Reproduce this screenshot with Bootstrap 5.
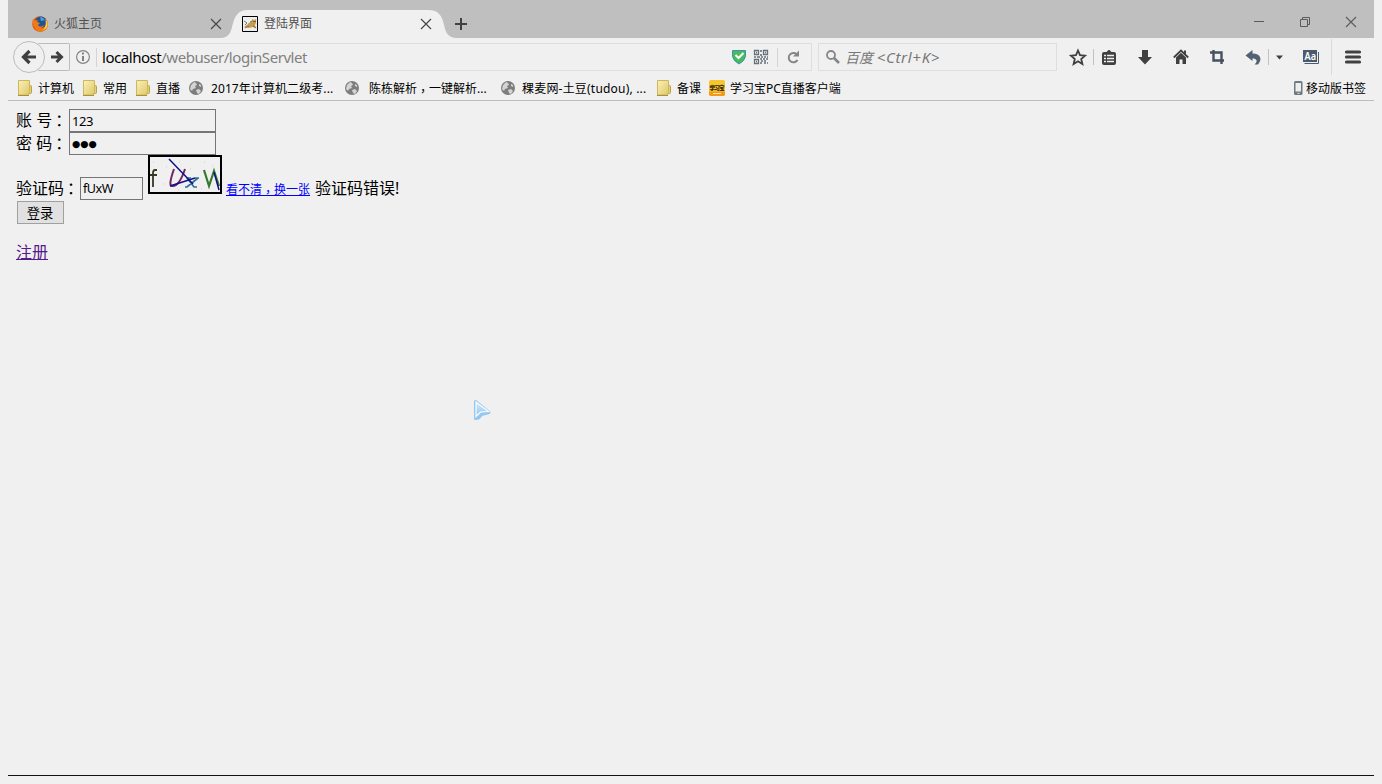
<!DOCTYPE html>
<html lang="zh-CN">
<head>
<meta charset="utf-8">
<title>登陆界面</title>
<link href="https://cdn.jsdelivr.net/npm/bootstrap@5.3.0/dist/css/bootstrap.min.css" rel="stylesheet">
<style>
body{background:#f0f0f0;color:#000;font:12px/16px "Noto Sans","Noto Sans CJK SC",sans-serif;height:784px;overflow:hidden}
svg{display:block;flex:none}
.pn{font-family:"Noto Sans CJK TC",sans-serif;vertical-align:-3px;line-height:0!important}
label .pn{vertical-align:-1px;margin-left:1px}
.win{width:1366px;height:776px;margin-left:8px;border-bottom:1px solid #111}
.titlebar{height:38px;background:#bfbfbf;color:#505050}
.tab-idle{width:218px;padding:9px 0 0 24px}
.tab-on{width:218px;padding:9px 0 0 16px;height:38px}
.tab-shape{left:-6px;top:10px}
.tabname{line-height:30px;height:29px;width:156px;margin-left:6px}
.toolbar{height:38px}
.urlbar{width:743px;height:28px;border:1px solid #dedede;border-left:0;margin-left:-5px}
.url{font-size:15px;line-height:26px;width:625px;color:#808080;letter-spacing:-.46px;margin-left:-2px}
.url b{font-weight:400;color:#000}
.search{width:239px;height:28px;border:1px solid #dedede;margin-left:6px;color:#777;font-size:14px;line-height:26px;font-style:italic}
.search i{font-size:15px;letter-spacing:.7px}
.bookmarks{height:25px;border-bottom:1px solid #bdbdbd;display:grid;grid-template-columns:65px 53px 53px 156px 156px 156px 53px 1fr auto;padding:0 8px 0 9px}
.bookmarks>div{display:flex;align-items:center;white-space:nowrap}
.bookmarks div>span{line-height:22px;padding-top:2px}
.page{padding:8px;font-size:16px;line-height:22px}
.page label{line-height:23px}
.page .ln{display:flex;white-space:pre}
.fld{border:1px solid #757575;background:#f0f0f0;width:147px;height:23px;padding:1px 2px;font-size:13px;line-height:20px;border-radius:0;color:#000;min-height:0;letter-spacing:-.4px;font-family:"Noto Sans",sans-serif;outline:0}
.dots{font-family:"DejaVu Sans",sans-serif;font-size:9.5px;letter-spacing:0}
.code{width:63px;margin-top:22px;letter-spacing:-.5px;font-size:12.6px}
.go{width:47px;height:23px;background:#e1e1e1;border:1px solid #a0a0a0;border-radius:0;padding:0 1px 0 0;font-size:13.3px;line-height:20px;margin-left:1px;color:#000}
.again{font-size:12px;color:#00f;margin:24px 0 0 4px;height:17px;line-height:22px;text-decoration:none;border-bottom:1px solid #00f}
.reg{color:#551a8b}
.cursor{left:472px;top:398px}
</style>
</head>
<body>
<svg width="0" height="0" class="position-absolute"><defs>
<linearGradient id="fg" x2="1" y2="1"><stop stop-color="#fbf1b5"/><stop offset="1" stop-color="#dfc86b"/></linearGradient>
<linearGradient id="cg" x2="0" y2="1"><stop stop-color="#d8edfc"/><stop offset="1" stop-color="#8dc3ef"/></linearGradient>
<symbol id="folder" viewBox="0 0 16 16"><path d="M11 5.500h2.500q1 0 1 1v6q0 1-1 1H11z" fill="#e6d074" stroke="#bca143"/><path d="M1.500.5h11v11l-1 3.500h-10z" fill="url(#fg)" stroke="#cdb75d"/><path d="M1 15.500h11" stroke="#aa9136"/></symbol>
<symbol id="globe" viewBox="0 0 16 16"><circle cx="8" cy="8" r="7" fill="#7d7d7d"/><path d="M3 5 6 2l2 1 1 2-2 1 1 2-3 1-1 2-2-2zM8 10l3-1 2 2-2 3-2-1zM11 4l2 1v2l-2-1z" fill="#d4d4d4"/></symbol>
<symbol id="x" viewBox="0 0 12 12"><path d="m1 1 10 10M11 1 1 11" stroke="#484848" stroke-width="1.2"/></symbol>
</defs></svg>
<div class="win">
 <div class="titlebar d-flex">
  <div class="tab-idle d-flex">
   <svg width="16" height="16" viewBox="0 0 16 16" style="margin-top:7px"><circle cx="8" cy="8" r="7.800" fill="#e2560f"/><circle cx="8.800" cy="6.200" r="5.800" fill="#1f5597"/><path d="M8 1q3 0 5 3L9 5z" fill="#46a4db"/><path d="M.8 3 3 4.500l3-.5-1 2 3 1-2 2q2 3 6 0-1 3-4 3 5 1 6-4l-.5-4q4 5 1 9-4 4-9 2Q-.5 9 .8 3z" fill="#f07a14"/><path d="M13.500 3q3 4 1.500 8-2 3-5 3.500 5-3 3.500-11.500z" fill="#ffd140"/></svg>
   <div class="tabname">火狐主页</div>
   <svg width="12" height="12" style="margin-top:9px"><use href="#x"/></svg>
  </div>
  <div class="tab-on d-flex position-relative">
   <svg class="tab-shape position-absolute" width="238" height="28" viewBox="0 0 238 28"><path d="M0 28c9 0 11-6 12.500-13C15 6 18 0 28 0H208c11 0 14 6 16 15 1.500 7 4 13 13 13z" fill="#f0f0f0"/></svg>
   <svg class="position-relative" width="16" height="16" viewBox="0 0 16 16" style="margin-top:7px"><path d="M.5.5h15v15H.5z" fill="#eee" stroke="#000"/><path d="M5 9q2-3 4-3l1-1V3l2 1 2-1v4l-1 2 1 3-3-1-4 1-3-1-2 1 1-2z" fill="#c59d4b"/><path d="m2 5 3 2-2 2m5-3 2-1m-7 7 4-2m4 0 3 2M11 5.500h3" fill="none" stroke="#5d594c" stroke-width=".8"/></svg>
   <div class="tabname position-relative">登陆界面</div>
   <svg class="position-relative" width="12" height="12" style="margin-top:9px"><use href="#x"/></svg>
  </div>
  <svg class="position-relative" width="14" height="14" viewBox="0 0 14 14" style="margin:17px 0 0 10px"><path d="M7 1v12M1 7h12" stroke="#404040" stroke-width="2"/></svg>
  <svg class="ms-auto" width="106" height="14" viewBox="0 0 106 14" style="margin:15px 17px 0 0"><path d="M3 6.500h10M49.500 4.500h7v7h-7zM51.500 4V2.500h7v7H57" fill="none" stroke="#5b5b5b"/><path d="m95 2 10 10m0-10L95 12" stroke="#5b5b5b" stroke-width="1.100"/></svg>
 </div>
 <div class="toolbar d-flex align-items-center">
  <svg width="62" height="32" viewBox="0 0 62 32" style="margin-left:4px"><path d="M26 2.500h31.500v27H26" fill="#f0f0f0" stroke="#bcbcbc"/><circle cx="17" cy="16" r="15.500" fill="#f0f0f0" stroke="#bcbcbc"/><path d="m17.500 10-6 6 6 6M12 16h12" fill="none" stroke="#404040" stroke-width="3.200"/><path d="m44.500 11 5 5-5 5M39 16h10" fill="none" stroke="#404040" stroke-width="3"/></svg>
  <div class="urlbar d-flex align-items-center">
   <svg width="28" height="26" viewBox="0 0 28 26" style="margin-left:7px"><circle cx="7" cy="13" r="6.400" fill="none" stroke="#858585" stroke-width="1.200"/><path d="M7 12v5M7 8.500v2" stroke="#757575" stroke-width="1.800"/><path d="M20.500 4v19" stroke="#d4d4d4"/></svg>
   <div class="url"><b>localhost</b>/webuser/loginServlet</div>
   <svg width="78" height="26" viewBox="0 0 78 26" style="margin-left:3px"><path d="M2.500 6.500h13v6Q14.500 17 9 20 3.500 17 2.500 12.500z" fill="#48bb5b" stroke="#3d91b4"/><path d="m5.500 11 3 3 5-5" fill="none" stroke="#fff" stroke-width="2"/>
   <g fill="none" stroke="#667079"><path d="M24.500 6.500h4v4h-4zM33.500 6.500h4v4h-4zM24.500 15.500h4v4h-4z" stroke-width="1.300"/><path d="M26 8.500h1m8 0h1m-10 9h1M31 6v2m0 2v2M24 13h2m1 0h3m1 0h2m1 0h2m1 0h1M30 15h2m1 0h2m1 0h2m-7 2h2m1 0h2m-6 2h2m2 0h2m1 0h1" stroke-width="1.600"/></g><path d="M47.500 4v19" stroke="#d4d4d4"/><path d="M67.500 16a4.700 4.700 0 1 1-1-6" fill="none" stroke="#858585" stroke-width="2"/><path d="M69 6.500v6h-6z" fill="#858585"/></svg>
  </div>
  <div class="search d-flex align-items-center"><svg width="14" height="14" viewBox="0 0 14 14" style="margin:0 5px 0 7px"><circle cx="5" cy="5" r="4" fill="none" stroke="#868686" stroke-width="1.800"/><path d="m8 8 5 5" stroke="#868686" stroke-width="2.600"/></svg><span>百度 <i>&lt;Ctrl+K&gt;</i></span></div>
  <svg width="303" height="38" viewBox="0 0 303 38" style="margin-left:7px">
   <path d="m14 12.500 2 4.700 5 .5-3.800 3.300 1.200 5-4.400-2.700L9.600 26l1.200-5L7 17.700l5-.5z" fill="none" stroke="#404040" stroke-width="1.800"/>
   <path d="M29.500 11v16M204.500 11v16" stroke="#c2c2c2"/><path d="M267.500 1v36" stroke="#dadada"/>
   <path d="M40 14h2.500l2-2h1l2 2H50q2 0 2 2v9q0 2-2 2H40q-2 0-2-2v-9q0-2 2-2z" fill="#404040"/><path d="M40 17.500h2m1 0h7m-10 3h2m1 0h7m-10 3h2m1 0h7" stroke="#f0f0f0" stroke-width="1.500"/>
   <path d="M78 12h6v7h4l-7 7.500-7-7.500h4z" fill="#404040"/>
   <path d="m109.800 19.500 7.200-7 7.200 7" fill="none" stroke="#404040" stroke-width="1.800"/><path d="m112 19.500 5-4.700 5 4.700V26h-3.500v-4.500h-3V26H112zM120 12.500h2v4h-2z" fill="#404040"/>
   <path d="M146 14.500h11.500V26M149.500 12v10.500H160" fill="none" stroke="#46505f" stroke-width="2.400"/>
   <path d="m181.500 17.500 7-5.500v3.500c8.500 0 10 6 5.500 11h-3.500c4-3.500 2-6-2-6V23z" fill="#526174"/><path d="M212 17.500h7l-3.500 4z" fill="#404040"/>
   <path d="M239 12h14v12h-14z" fill="#4a5b70"/><path d="M240.500 25.500h14V14" fill="none" stroke="#4a5b70"/><text x="240.500" y="21.500" font-size="10" font-weight="600" fill="#fff" textLength="11.500" lengthAdjust="spacingAndGlyphs">Aa</text>
   <path d="M282.500 14h13m-13 5h13m-13 5h13" stroke="#404040" stroke-width="3.200" stroke-linecap="round"/>
  </svg>
 </div>
 <div class="bookmarks">
  <div><svg width="16" height="16"><use href="#folder"/></svg><span style="margin-left:5px">计算机</span></div>
  <div><svg width="16" height="16"><use href="#folder"/></svg><span style="margin-left:5px">常用</span></div>
  <div><svg width="16" height="16"><use href="#folder"/></svg><span style="margin-left:5px">直播</span></div>
  <div><svg width="16" height="16"><use href="#globe"/></svg><span style="margin-left:7px;letter-spacing:.08px">2017年计算机二级考...</span></div>
  <div><svg width="16" height="16"><use href="#globe"/></svg><span style="margin-left:9px">陈栋解析<span class="pn" lang="zh-TW">，</span>一键解析...</span></div>
  <div><svg width="16" height="16"><use href="#globe"/></svg><span style="margin-left:6px;letter-spacing:.2px">稞麦网-土豆(tudou), ...</span></div>
  <div><svg width="16" height="16"><use href="#folder"/></svg><span style="margin-left:5px">备课</span></div>
  <div><svg width="16" height="16" viewBox="0 0 16 16"><rect width="16" height="16" rx="2" fill="#f7c52d"/><path d="M0 11.500h16V14q0 2-2 2H2q-2 0-2-2z" fill="#f39a16"/><text x=".5" y="9.500" font-size="5.500" font-weight="900" textLength="15" fill="#33250a">学习宝</text><path d="M4 13.500h8" stroke="#fde3b0"/></svg><span style="margin-left:5px">学习宝PC直播客户端</span></div>
  <div><svg width="10" height="16" viewBox="0 0 10 16"><rect x="1" y="1" width="8.500" height="14" rx="1.500" fill="#6d7a80"/><path d="M2.500 3H8v8.500H2.500z" fill="#eee"/><path d="M4.500 13.300h2" stroke="#eee"/></svg><span style="margin-left:3px">移动版书签</span></div>
 </div>
 <form class="page">
  <div class="ln" style="height:23px"><label style="width:53px">账 号<span class="pn" lang="zh-TW" style="margin-left:-1px">：</span></label><input class="fld" value="123"></div>
  <div class="ln" style="height:23px"><label style="width:53px">密 码<span class="pn" lang="zh-TW" style="margin-left:-1px">：</span></label><input class="fld dots" type="text" value="●●●"></div>
  <div class="ln" style="height:46px"><label style="width:64px;padding-top:22px">验证码<span class="pn" lang="zh-TW" style="margin-left:-1px">：</span></label><input class="fld code" value="fUxW">
   <svg width="74" height="39" viewBox="0 0 74 39" style="margin-left:5px"><path d="M1 1h72v37H1z" fill="#f0f0f0" stroke="#000" stroke-width="2"/><g fill="none"><path d="M9 15H7q-2 0-2 3v14M2 20h7" stroke="#333b22" stroke-width="1.800"/><path d="M26 14q-6 17-2 17 7 1 13-17" stroke="#78245d" stroke-width="2"/><path d="m39 23 7 9h3m1-9L39 32h-2m2-9h4m4 0h4" stroke="#2d7196" stroke-width="1.700"/><path d="m56 15 5 16 5-15 5 15" stroke="#387a2c" stroke-width="2.200"/><path d="m21 4 24 25M22 31l25-8M66 17l5 18" stroke="#10108f" stroke-width="1.500"/></g><path d="M5 7h1m12 5h1m12-5h1m10 7h1m13-7h1m7 4h1M16 29h1m13 6h1m22-1h1" stroke="#e2bde5"/></svg>
   <a class="again" href="#">看不清<span class="pn" lang="zh-TW">，</span>换一张</a><span style="padding-top:22px;margin-left:5px">验证码错误!</span>
  </div>
  <button class="go btn d-block" type="button">登录</button>
  <div class="ln" style="margin-top:17px"><a class="reg" href="#">注册</a></div>
 </form>
</div>
<svg class="cursor position-absolute" width="21" height="24" viewBox="0 0 21 24"><path d="M3.500 3.500v17l3-.5 3-3.500 7.500-2z" fill="url(#cg)" stroke="#94c7ee" stroke-width="3" stroke-linejoin="round"/><path d="M4 4v14.500l4.500-4.500 8-.5z" fill="url(#cg)" stroke="#fff" stroke-width="1.200"/></svg>
<script src="https://cdn.jsdelivr.net/npm/bootstrap@5.3.0/dist/js/bootstrap.bundle.min.js"></script>
</body>
</html>
